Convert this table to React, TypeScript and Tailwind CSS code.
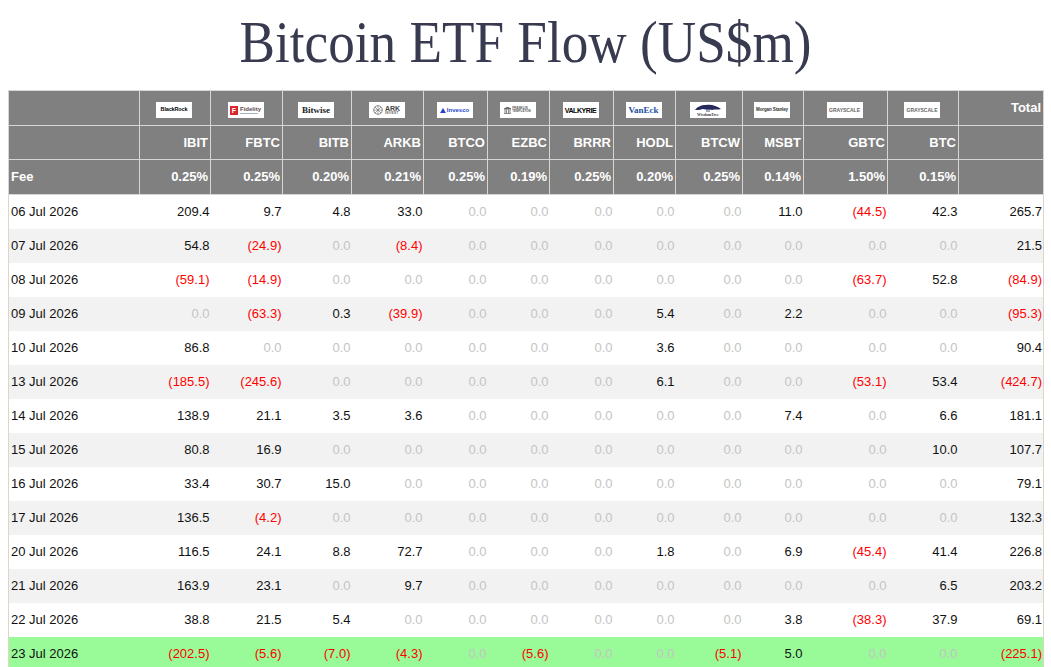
import React from "react";

type Etf = { ticker: string; fee: string; logo: React.ReactNode };

const Box = ({ children, className = "" }: { children: React.ReactNode; className?: string }) => (
  <div className={"mx-auto w-[36px] h-[16px] bg-white flex items-center justify-center overflow-hidden translate-y-[2px] " + className}>
    {children}
  </div>
);

const etfs: Etf[] = [
  {
    ticker: "IBIT",
    fee: "0.25%",
    logo: (
      <Box>
        <span className="text-[5.5px] font-bold text-black tracking-tight leading-none">BlackRock</span>
      </Box>
    ),
  },
  {
    ticker: "FBTC",
    fee: "0.25%",
    logo: (
      <Box className="gap-[2px]">
        <span className="w-[8px] h-[9px] bg-[#d8262c] text-white text-[7px] font-bold leading-[9px] text-center">F</span>
        <span className="flex flex-col items-start leading-none">
          <span className="text-[6px] font-bold text-[#5a4a4f] leading-none">Fidelity</span>
          <span className="w-[18px] h-[1px] bg-[#9fb3c0] mt-[1px]"></span>
        </span>
      </Box>
    ),
  },
  {
    ticker: "BITB",
    fee: "0.20%",
    logo: (
      <Box>
        <span className="text-[9px] text-[#222] leading-none font-['Liberation_Serif',serif]">Bitwise</span>
      </Box>
    ),
  },
  {
    ticker: "ARKB",
    fee: "0.21%",
    logo: (
      <Box className="gap-[2px]">
        <svg width="10" height="10" viewBox="0 0 10 10">
          <circle cx="5" cy="5" r="4.3" fill="none" stroke="#555" strokeWidth="0.7" />
          <path d="M5 0.7V9.3M0.7 5H9.3M2 2L8 8M8 2L2 8" stroke="#555" strokeWidth="0.5" />
        </svg>
        <span className="flex flex-col items-start leading-none">
          <span className="text-[7px] text-[#444] leading-none">ARK</span>
          <span className="text-[3px] text-[#555] leading-none tracking-[0.5px]">INVEST</span>
        </span>
      </Box>
    ),
  },
  {
    ticker: "BTCO",
    fee: "0.25%",
    logo: (
      <Box className="gap-[1px]">
        <svg width="6" height="5" viewBox="0 0 6 5">
          <path d="M0 5L3 0L6 5Z" fill="#2a44d0" />
        </svg>
        <span className="text-[6px] font-bold text-[#2a44d0] leading-none">Invesco</span>
      </Box>
    ),
  },
  {
    ticker: "EZBC",
    fee: "0.19%",
    logo: (
      <Box className="gap-[1px]">
        <svg width="7" height="7" viewBox="0 0 7 7">
          <path d="M0 2L3.5 0L7 2Z M1 2.5V6M2.5 2.5V6M4.5 2.5V6M6 2.5V6M0 6.5H7" stroke="#555" strokeWidth="0.7" fill="#777" />
        </svg>
        <span className="flex flex-col items-start leading-none">
          <span className="text-[3px] text-[#555] leading-none">FRANKLIN</span>
          <span className="text-[3px] text-[#555] leading-none">TEMPLETON</span>
        </span>
      </Box>
    ),
  },
  {
    ticker: "BRRR",
    fee: "0.25%",
    logo: (
      <Box>
        <span className="text-[7px] font-black text-black tracking-[-0.4px] leading-none">VALKYRIE</span>
      </Box>
    ),
  },
  {
    ticker: "HODL",
    fee: "0.20%",
    logo: (
      <Box>
        <span className="text-[9px] font-bold text-[#1d4fa0] leading-none font-['Liberation_Serif',serif]">VanEck</span>
      </Box>
    ),
  },
  {
    ticker: "BTCW",
    fee: "0.25%",
    logo: (
      <Box className="flex-col gap-0">
        <svg width="30" height="9" viewBox="0 0 30 9">
          <path d="M2 6C4 3 8 1 13 1C18 0 24 2 28 5C25 6 22 5 19 6C16 5 13 6 10 5C7 6 5 6 2 6Z" fill="#26285e" />
          <path d="M14 5V8M16 5V8" stroke="#26285e" strokeWidth="0.8" />
        </svg>
        <span className="text-[4px] text-[#444] leading-none font-['Liberation_Serif',serif]">WisdomTree</span>
      </Box>
    ),
  },
  {
    ticker: "MSBT",
    fee: "0.14%",
    logo: (
      <Box>
        <span className="text-[4.5px] text-[#333] leading-none tracking-tight">Morgan Stanley</span>
      </Box>
    ),
  },
  {
    ticker: "GBTC",
    fee: "1.50%",
    logo: (
      <Box>
        <span className="text-[5px] text-[#666] leading-none">GRAYSCALE</span>
      </Box>
    ),
  },
  {
    ticker: "BTC",
    fee: "0.15%",
    logo: (
      <Box>
        <span className="text-[5px] text-[#666] leading-none">GRAYSCALE</span>
      </Box>
    ),
  },
];

const rows: [string, number[]][] = [
  ["06 Jul 2026", [209.4, 9.7, 4.8, 33.0, 0, 0, 0, 0, 0, 11.0, -44.5, 42.3, 265.7]],
  ["07 Jul 2026", [54.8, -24.9, 0, -8.4, 0, 0, 0, 0, 0, 0, 0, 0, 21.5]],
  ["08 Jul 2026", [-59.1, -14.9, 0, 0, 0, 0, 0, 0, 0, 0, -63.7, 52.8, -84.9]],
  ["09 Jul 2026", [0, -63.3, 0.3, -39.9, 0, 0, 0, 5.4, 0, 2.2, 0, 0, -95.3]],
  ["10 Jul 2026", [86.8, 0, 0, 0, 0, 0, 0, 3.6, 0, 0, 0, 0, 90.4]],
  ["13 Jul 2026", [-185.5, -245.6, 0, 0, 0, 0, 0, 6.1, 0, 0, -53.1, 53.4, -424.7]],
  ["14 Jul 2026", [138.9, 21.1, 3.5, 3.6, 0, 0, 0, 0, 0, 7.4, 0, 6.6, 181.1]],
  ["15 Jul 2026", [80.8, 16.9, 0, 0, 0, 0, 0, 0, 0, 0, 0, 10.0, 107.7]],
  ["16 Jul 2026", [33.4, 30.7, 15.0, 0, 0, 0, 0, 0, 0, 0, 0, 0, 79.1]],
  ["17 Jul 2026", [136.5, -4.2, 0, 0, 0, 0, 0, 0, 0, 0, 0, 0, 132.3]],
  ["20 Jul 2026", [116.5, 24.1, 8.8, 72.7, 0, 0, 0, 1.8, 0, 6.9, -45.4, 41.4, 226.8]],
  ["21 Jul 2026", [163.9, 23.1, 0, 9.7, 0, 0, 0, 0, 0, 0, 0, 6.5, 203.2]],
  ["22 Jul 2026", [38.8, 21.5, 5.4, 0, 0, 0, 0, 0, 0, 3.8, -38.3, 37.9, 69.1]],
  ["23 Jul 2026", [-202.5, -5.6, -7.0, -4.3, 0, -5.6, 0, 0, -5.1, 5.0, 0, 0, -225.1]],
];

const fmt = (v: number) => {
  if (v === 0) return { text: "0.0", cls: "text-[#c4c4c4]" };
  if (v < 0) return { text: `(${Math.abs(v).toFixed(1)})`, cls: "text-[#ff0000]" };
  return { text: v.toFixed(1), cls: "text-[#111]" };
};

const th = "border border-[#d6d6d6] bg-[#808080] text-white font-bold text-right pr-[2px] p-0";

export default function App() {
  return (
    <div className="min-h-screen bg-white px-[8px] font-['Liberation_Sans',Arial,sans-serif]">
      <div className="pt-[12px] pb-[18px] text-center">
        <h1 className="inline-block scale-x-[0.887] text-[60px] leading-[60px] font-normal text-[#383b4f] font-['Liberation_Serif','Times_New_Roman',serif]">
          Bitcoin ETF Flow (US$m)
        </h1>
      </div>
      <table className="table-fixed w-[1035px] border-collapse text-[13px]">
        <colgroup>
          <col className="w-[131px]" />
          <col className="w-[71px]" />
          <col className="w-[72px]" />
          <col className="w-[69px]" />
          <col className="w-[72px]" />
          <col className="w-[64px]" />
          <col className="w-[62px]" />
          <col className="w-[64px]" />
          <col className="w-[62px]" />
          <col className="w-[67px]" />
          <col className="w-[61px]" />
          <col className="w-[84px]" />
          <col className="w-[71px]" />
          <col className="w-[85px]" />
        </colgroup>
        <thead>
          <tr className="h-[35px]">
            <th className={th}></th>
            {etfs.map((e) => (
              <th key={e.ticker} className={th + " text-center"}>
                {e.logo}
              </th>
            ))}
            <th className={th}>Total</th>
          </tr>
          <tr className="h-[34px]">
            <th className={th}></th>
            {etfs.map((e) => (
              <th key={e.ticker} className={th}>
                {e.ticker}
              </th>
            ))}
            <th className={th}></th>
          </tr>
          <tr className="h-[35px]">
            <th className={th + " !text-left pl-[2px]"}>Fee</th>
            {etfs.map((e) => (
              <th key={e.ticker} className={th}>
                {e.fee}
              </th>
            ))}
            <th className={th}></th>
          </tr>
        </thead>
        <tbody>
          {rows.map(([date, vals], i) => {
            const last = i === rows.length - 1;
            const bg = last ? "bg-[#98fb98]" : i % 2 === 1 ? "bg-[#f2f2f2]" : "bg-white";
            return (
              <tr key={date} className={bg + " h-[34px]"}>
                <td className="border-l border-[#ddd6c8] pl-[2px] text-[#111] p-0">{date}</td>
                {vals.map((v, j) => {
                  const f = fmt(v);
                  return (
                    <td
                      key={j}
                      className={
                        "text-right pr-[1px] p-0 " +
                        f.cls +
                        (j === vals.length - 1 ? " border-r border-[#ddd6c8]" : "")
                      }
                    >
                      {f.text}
                    </td>
                  );
                })}
              </tr>
            );
          })}
        </tbody>
      </table>
    </div>
  );
}
